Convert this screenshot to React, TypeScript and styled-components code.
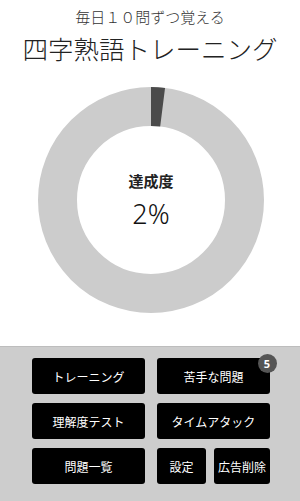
import React from "react";
import styled, { createGlobalStyle } from "styled-components";

const Global = createGlobalStyle`
  html, body { margin: 0; padding: 0; background: #ffffff; }
  body { font-family: "Noto Sans CJK JP", "Noto Sans", sans-serif; }
  #root { height: 100vh; }
`;

const Page = styled.div`
  height: 100vh;
  display: flex;
  flex-direction: column;
  background: #ffffff;
  color: #222222;
`;

const Header = styled.header`
  display: flex;
  flex-direction: column;
  align-items: center;
  padding-top: 7px;
`;

const Subtitle = styled.div`
  font-size: 15px;
  line-height: 20px;
  font-weight: 300;
  color: #333333;
`;

const Title = styled.h1`
  margin: 4px 0 0;
  font-size: 25.5px;
  line-height: 34px;
  font-weight: 300;
  color: #222222;
  letter-spacing: 0;
`;

const ChartArea = styled.div`
  display: flex;
  justify-content: center;
  padding-top: 22px;
  padding-left: 2px;
`;

const ChartStack = styled.div`
  display: grid;
  width: 226px;
  height: 226px;
  & > * { grid-area: 1 / 1; }
`;

const CenterLabel = styled.div`
  display: flex;
  flex-direction: column;
  align-items: center;
  justify-content: center;
  padding-top: 1px;
`;

const LabelTitle = styled.div`
  font-size: 15px;
  line-height: 20px;
  font-weight: 700;
  color: #222222;
`;

const LabelValue = styled.div`
  margin-top: 6px;
  font-size: 27px;
  line-height: 34px;
  font-weight: 300;
  font-family: "Noto Sans", "Liberation Sans", sans-serif;
  color: #111111;
`;

const Panel = styled.section`
  margin-top: auto;
  height: 155px;
  box-sizing: border-box;
  background: #cdcdcd;
  border-top: 1px solid #bdbdbd;
  padding: 11px 30px 0 32px;
`;

const Grid = styled.div`
  display: grid;
  grid-template-columns: 113px 113px;
  grid-auto-rows: 36px;
  column-gap: 12px;
  row-gap: 9px;
`;

const SplitCell = styled.div`
  display: grid;
  grid-template-columns: 49px 56px;
  column-gap: 8px;
`;

const MenuButton = styled.button`
  position: relative;
  border: none;
  margin: 0;
  padding: 0;
  background: #000000;
  color: #ffffff;
  border-radius: 3px;
  font-family: "Noto Sans CJK JP", "Noto Sans", sans-serif;
  font-size: 12px;
  font-weight: 400;
  display: flex;
  align-items: center;
  justify-content: center;
  white-space: nowrap;
  cursor: pointer;
`;

const Badge = styled.span`
  position: absolute;
  top: -4.5px;
  right: -6.5px;
  width: 19px;
  height: 19px;
  border-radius: 50%;
  background: #555555;
  color: #ffffff;
  font-family: "Noto Sans", "Liberation Sans", sans-serif;
  font-size: 11px;
  font-weight: 700;
  line-height: 19px;
  text-align: center;
`;

const Donut: React.FC<{ percent: number }> = ({ percent }) => {
  const r = 93.5;
  const c = 2 * Math.PI * r;
  const dark = (c * percent) / 100;
  return (
    <svg width="226" height="226" viewBox="0 0 226 226">
      <circle cx="113" cy="113" r={r} fill="none" stroke="#cccccc" strokeWidth="39" />
      <circle
        cx="113"
        cy="113"
        r={r}
        fill="none"
        stroke="#4b4b4b"
        strokeWidth="39"
        strokeDasharray={`${dark} ${c - dark}`}
        transform="rotate(-90 113 113)"
      />
    </svg>
  );
};

export default function App() {
  const percent = 2;
  return (
    <Page>
      <Global />
      <Header>
        <Subtitle>毎日１０問ずつ覚える</Subtitle>
        <Title>四字熟語トレーニング</Title>
      </Header>
      <ChartArea>
        <ChartStack>
          <Donut percent={percent} />
          <CenterLabel>
            <LabelTitle>達成度</LabelTitle>
            <LabelValue>{percent}%</LabelValue>
          </CenterLabel>
        </ChartStack>
      </ChartArea>
      <Panel>
        <Grid>
          <MenuButton>トレーニング</MenuButton>
          <MenuButton>
            苦手な問題
            <Badge>5</Badge>
          </MenuButton>
          <MenuButton>理解度テスト</MenuButton>
          <MenuButton>タイムアタック</MenuButton>
          <MenuButton>問題一覧</MenuButton>
          <SplitCell>
            <MenuButton>設定</MenuButton>
            <MenuButton>広告削除</MenuButton>
          </SplitCell>
        </Grid>
      </Panel>
    </Page>
  );
}
